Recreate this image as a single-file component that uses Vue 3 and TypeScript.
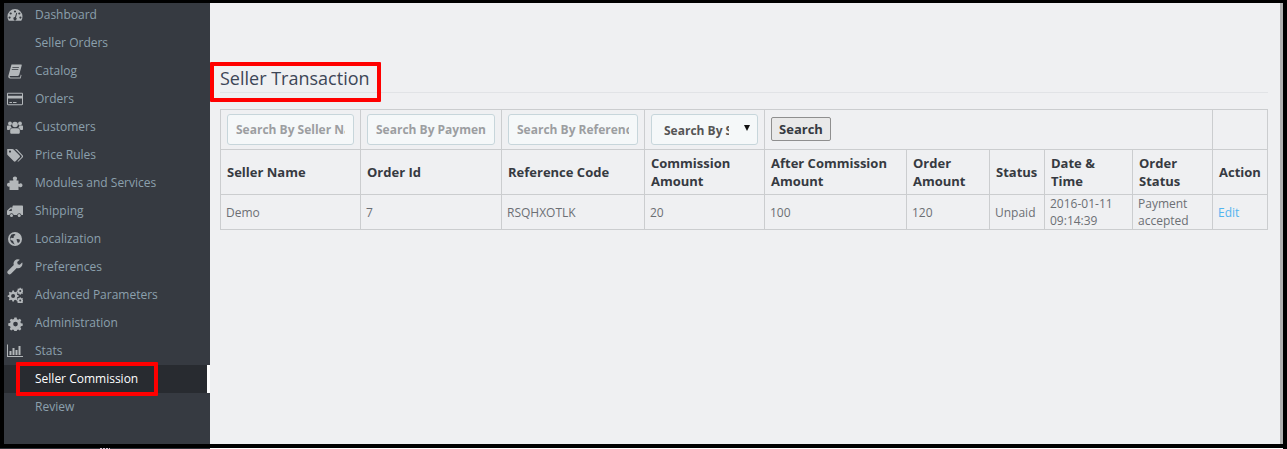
<script setup lang="ts">
interface NavItem { label: string; icon: string; active?: boolean }
const nav: NavItem[] = [
  { label: 'Dashboard', icon: 'dashboard' },
  { label: 'Seller Orders', icon: '' },
  { label: 'Catalog', icon: 'book' },
  { label: 'Orders', icon: 'card' },
  { label: 'Customers', icon: 'users' },
  { label: 'Price Rules', icon: 'tags' },
  { label: 'Modules and Services', icon: 'puzzle' },
  { label: 'Shipping', icon: 'truck' },
  { label: 'Localization', icon: 'globe' },
  { label: 'Preferences', icon: 'wrench' },
  { label: 'Advanced Parameters', icon: 'cogs' },
  { label: 'Administration', icon: 'cog' },
  { label: 'Stats', icon: 'chart' },
  { label: 'Seller Commission', icon: '', active: true },
  { label: 'Review', icon: '' },
]
const searches = ['Search By Seller Name', 'Search By Payment', 'Search By Reference']
const headers = ['Seller Name', 'Order Id', 'Reference Code', 'Commission Amount', 'After Commission Amount', 'Order Amount', 'Status', 'Date & Time', 'Order Status', 'Action']
const row = ['Demo', '7', 'RSQHXOTLK', '20', '100', '120', 'Unpaid', '2016-01-11 09:14:39', 'Payment accepted']
</script>

<template>
  <div class="page">
    <div class="frame">
      <aside class="sidebar">
        <ul class="nav">
          <li v-for="item in nav" :key="item.label" class="nav-item" :class="{ active: item.active }">
            <span class="ico">
              <svg v-if="item.icon === 'dashboard'" viewBox="0 0 16 16" width="16" height="16"><path fill-rule="evenodd" d="M8 2a7.500 7.500 0 0 0-7.500 7.500c0 1.500.4 2.900 1.100 4 .1.200.3.300.5.300h11.800c.2 0 .4-.1.5-.3.7-1.100 1.100-2.500 1.100-4A7.500 7.500 0 0 0 8 2zM8 3.400a1.100 1.100 0 1 1 0 2.200 1.100 1.100 0 0 1 0-2.200zM3.700 5.400a1.100 1.100 0 1 1 0 2.200 1.100 1.100 0 0 1 0-2.200zM12.300 5.400a1.100 1.100 0 1 1 0 2.200 1.100 1.100 0 0 1 0-2.200zM2.600 9.500a1.100 1.100 0 1 1 0 2.200 1.100 1.100 0 0 1 0-2.200zM13.400 9.500a1.100 1.100 0 1 1 0 2.200 1.100 1.100 0 0 1 0-2.200zM9.300 5.800l.9.300-1.200 4.300a1.600 1.600 0 1 1-1-.3z"/></svg>
              <svg v-else-if="item.icon === 'book'" viewBox="0 0 16 16" width="16" height="16"><path fill-rule="evenodd" d="M4.500 1.500H14c.6 0 .9.400.7 1l-2.500 9.300c-.2.7-.7 1.200-1.500 1.200H3.500c-.6 0-.9.500-.7 1 .1.300.4.500.8.500h9.400l.8-3 .7.700-.9 3.300H3.200C2 15.500 1 14.300 1.300 13zM5.500 4.200l-.2.800h6.500l.2-.8zM4.900 6.300l-.2.800h6.500l.2-.8z"/></svg>
              <svg v-else-if="item.icon === 'card'" viewBox="0 0 16 16" width="16" height="16"><path fill-rule="evenodd" d="M1.200 1.800h13.600c.6 0 1.200.5 1.200 1.200v10c0 .7-.6 1.200-1.200 1.200H1.200C.6 14.200 0 13.700 0 13V3c0-.7.600-1.200 1.200-1.200zM1 3v1.800h14V3c0-.1-.1-.2-.2-.2H1.200C1.100 2.800 1 2.900 1 3zm0 4.400V13c0 .1.100.2.200.2h13.600c.1 0 .2-.1.200-.2V7.400zM2.400 11h2.600v1H2.400zm3.600 0h3.500v1H6z"/></svg>
              <svg v-else-if="item.icon === 'users'" viewBox="0 0 16 16" width="16" height="16"><circle cx="3" cy="4.500" r="1.900"/><circle cx="13" cy="4.500" r="1.900"/><circle cx="8" cy="5.500" r="2.800"/><path d="M0 7.500c0-.6.500-1 1-1h2.500c.2 1 .7 1.700 1.300 2.200C3.500 9 2.700 10 2.600 11H1c-.6 0-1-.4-1-1zM16 7.500c0-.6-.5-1-1-1h-2.500c-.2 1-.7 1.700-1.300 2.200 1.300.3 2.100 1.300 2.200 2.300H15c.6 0 1-.4 1-1zM5 9.200h6c1 0 1.800.8 1.800 2v2.300c0 .8-.6 1.300-1.300 1.300h-7c-.7 0-1.300-.5-1.300-1.300v-2.300c0-1.200.8-2 1.800-2z"/></svg>
              <svg v-else-if="item.icon === 'tags'" viewBox="0 0 16 16" width="16" height="16"><path fill-rule="evenodd" d="M.500 2h4.800c.5 0 1 .2 1.300.5l6 6c.5.600.5 1.300 0 1.800l-4 4c-.5.500-1.300.5-1.800 0l-6-6C.400 8 .200 7.500.200 7V2.300c0-.2.100-.3.300-.3zM3 3.500a1.100 1.100 0 1 0 0 2.200 1.100 1.100 0 0 0 0-2.200z"/><path d="M8 2h1c.5 0 1 .2 1.300.5l5.500 6c.5.600.5 1.300 0 1.800l-4 4c-.4.400-1 .4-1.400.2l4-4.200c.5-.5.5-1.200 0-1.800z"/></svg>
              <svg v-else-if="item.icon === 'puzzle'" viewBox="0 0 16 16" width="16" height="16"><path d="M2.500 5.500H6c.4 0 .6-.3.400-.7-.3-.4-.6-.8-.6-1.400C5.800 2.300 6.800 1.500 8 1.500s2.100.8 2.100 1.900c0 .6-.3 1-.6 1.400-.2.400 0 .7.400.7h1.600v3c0 .4.300.6.700.4.400-.3.800-.6 1.400-.6 1 0 1.900.9 1.900 2s-.9 2-1.900 2c-.6 0-1-.3-1.400-.6-.4-.2-.7 0-.7.400v3H2.500v-3.500c0-.4.300-.6.600-.4-.4.300-.8.500-1.300.5-1 0-1.800-.9-1.800-2s.8-2 1.800-2c.5 0 .9.200 1.300.5-.3.200-.6 0-.6-.4z"/></svg>
              <svg v-else-if="item.icon === 'truck'" viewBox="0 0 16 16" width="16" height="16"><path fill-rule="evenodd" d="M6.500 2.500h8.500c.6 0 1 .4 1 1v8.500h-1.600a2.200 2.200 0 0 0-4.300 0H6.700a2.200 2.200 0 0 0-4.300 0H1c-.6 0-1-.4-1-1V8.300c0-.4.100-.7.400-1l2.400-2.400c.3-.3.600-.4 1-.4h1.700V3.500c0-.6.400-1 1-1zM1.700 8H4.800V5.800H4z"/><circle cx="4.500" cy="12.500" r="1.500"/><circle cx="12.200" cy="12.500" r="1.500"/></svg>
              <svg v-else-if="item.icon === 'globe'" viewBox="0 0 16 16" width="16" height="16"><path fill-rule="evenodd" d="M8 1a7 7 0 1 0 0 14A7 7 0 0 0 8 1zM4.500 3.500c.8.200 1.300-.3 2-.5.700-.2 2 .2 1.800 1-.2.800-1.200.5-1.500 1.200-.3.700.3 1.500-.5 1.800-.8.300-1.200-.5-2-.3-.8.200-1.300 1.100-.8 2 .4.800 1.500.6 2.300 1 .7.400.6 1.500 1 2.300.4.700 1 .8.800 1.500a6 6 0 0 1-3.700-9zM10 8c.8-.3 2 0 2.600.6.500.6.200 1.700-.2 2.400-.4.700-1.200.9-1.800.4-.6-.5-.3-1.200-.7-1.800C9.500 9 9.300 8.300 10 8z"/></svg>
              <svg v-else-if="item.icon === 'wrench'" viewBox="0 0 16 16" width="16" height="16"><path d="M15.300 3.800c.1-.2 0-.4-.2-.3l-2.300 2.200-2.100-.5-.5-2.100L12.500.9c.1-.2 0-.4-.2-.4a4.400 4.400 0 0 0-5.500 5.600L1 11.800a2.100 2.100 0 0 0 3 3l5.800-5.700a4.400 4.400 0 0 0 5.500-5.300z"/></svg>
              <svg v-else-if="item.icon === 'cogs'" viewBox="0 0 16 16" width="16" height="16"><path fill-rule="evenodd" d="M5.400 3.500h1.500l.3 1.300 1.100.5 1.200-.7 1 1.100-.7 1.100.5 1.200 1.300.3v1.500l-1.300.3-.5 1.200.7 1.100-1 1-1.200-.7-1.100.5-.3 1.300H5.400l-.3-1.300-1.100-.5-1.200.7-1-1 .7-1.100-.5-1.200L.7 9.900V8.400l1.300-.3.5-1.200-.7-1.100 1-1.100 1.200.7 1.100-.5zM6.100 7.100a2 2 0 1 0 0 4 2 2 0 0 0 0-4z"/><path fill-rule="evenodd" d="M12.700.7h1l.2.800.7.300.7-.4.600.7-.4.700.3.700.8.200v1l-.8.200-.3.700.4.700-.6.700-.7-.4-.7.300-.2.800h-1l-.2-.8-.7-.3-.7.4-.7-.7.400-.7-.3-.7-.8-.2v-1l.8-.2.3-.7-.4-.7.7-.7.7.4.700-.3zM13.200 2.900a1 1 0 1 0 0 2 1 1 0 0 0 0-2z"/><path fill-rule="evenodd" d="M12.700 10.200h1l.2.800.7.300.7-.4.600.7-.4.700.3.700.8.200v1l-.8.200-.3.700.4.700-.6.600-.7-.4-.7.300-.2.800h-1l-.2-.8-.7-.3-.7.4-.7-.6.400-.7-.3-.7-.8-.2v-1l.8-.2.3-.7-.4-.7.7-.7.7.4.700-.3zM13.200 12.400a1 1 0 1 0 0 2 1 1 0 0 0 0-2z"/></svg>
              <svg v-else-if="item.icon === 'cog'" viewBox="0 0 16 16" width="15" height="15"><path fill-rule="evenodd" d="M6.800 1.500h2.400l.4 1.900 1.300.6 1.700-1 1.600 1.600-1 1.700.6 1.300 1.900.4v2.400l-1.900.4-.6 1.300 1 1.700-1.600 1.600-1.700-1-1.300.6-.4 1.700H6.800l-.4-1.700-1.300-.6-1.700 1-1.600-1.600 1-1.700-.6-1.300-1.900-.4V7.800l1.900-.4.6-1.300-1-1.700 1.600-1.600 1.700 1 1.300-.6zM8 6.100a2.500 2.500 0 1 0 0 5 2.500 2.500 0 0 0 0-5z"/></svg>
              <svg v-else-if="item.icon === 'chart'" viewBox="0 0 16 16" width="16" height="16"><path d="M0 1.500h1v11.500h15v1H0z"/><path d="M2.500 8h2v4h-2zM5.500 5h2v7h-2zM8.500 7h2v5h-2zM11.500 3h2v9h-2z"/></svg>
            </span>
            <span class="label">{{ item.label }}</span>
          </li>
        </ul>
      </aside>
      <main class="content">
        <h2 class="title">Seller Transaction</h2>
        <table class="grid">
          <colgroup>
            <col class="c1" /><col class="c2" /><col class="c3" /><col class="c4" /><col class="c5" />
            <col class="c6" /><col class="c7" /><col class="c8" /><col class="c9" /><col class="c10" />
          </colgroup>
          <thead>
            <tr class="filters">
              <td v-for="s in searches" :key="s"><input class="field" type="text" :placeholder="s" /></td>
              <td>
                <div class="select"><span class="select-text">Search By S</span><span class="caret"></span></div>
              </td>
              <td colspan="5"><button class="btn" type="button">Search</button></td>
              <td></td>
            </tr>
            <tr class="heads">
              <th v-for="h in headers" :key="h">{{ h }}</th>
            </tr>
          </thead>
          <tbody>
            <tr class="data">
              <td v-for="(c, i) in row" :key="i">{{ c }}</td>
              <td><a class="edit">Edit</a></td>
            </tr>
          </tbody>
        </table>
      </main>
      <div class="edge"></div>
      <div class="mark mark-title"></div>
      <div class="mark mark-nav"></div>
    </div>
    <div class="foot">
      <div class="foot-dark"><span class="specks"></span></div>
      <div class="foot-light"></div>
    </div>
  </div>
</template>

<style>
html, body { margin: 0; padding: 0; background: #000; }
</style>

<style scoped>
.page {
  box-sizing: border-box;
  width: 1287px;
  height: 449px;
  padding: 3px 4px 0;
  background: #000;
  overflow: hidden;
}
.frame {
  position: relative;
  height: 441px;
  display: flex;
  overflow: hidden;
  background: #eff0f2;
  font-family: "Open Sans", sans-serif;
}
.foot {
  display: flex;
  height: 1px;
  margin: 4px 0 0 -4px;
  width: 1283px;
}
.foot-dark {
  width: 210px;
  flex: none;
  background: #30343a;
  padding-left: 100px;
  box-sizing: border-box;
}
.specks {
  display: block;
  width: 10px;
  height: 1px;
  background: repeating-linear-gradient(90deg, #d9c9d9 0 2px, #30343a 2px 3px);
}
.foot-light {
  flex: 1;
  background: #fff;
}
.sidebar {
  width: 206px;
  flex: none;
  background: #363a41;
  overflow: hidden;
}
.nav {
  list-style: none;
  margin: -2px 0 0;
  padding: 0;
}
.nav-item {
  height: 28px;
  display: flex;
  align-items: center;
  color: #8ca0ad;
  font-size: 12px;
}
.label { padding-bottom: 2px; }
.nav-item.active {
  background: #282b30;
  color: #fff;
  border-right: 3px solid #fff;
}
.ico {
  width: 22px;
  margin-right: 9px;
  flex: none;
  display: flex;
  justify-content: center;
  fill: #b3b7ba;
}
.content {
  flex: 1;
  min-width: 0;
  padding: 62px 12px 0 10px;
}
.edge {
  width: 3px;
  flex: none;
  background: #b0b0b0;
}
.title {
  margin: 0 0 16px;
  padding: 1px 0 2px;
  height: 24px;
  border-bottom: 1px solid #e1e3e6;
  font-weight: 400;
  font-size: 18px;
  line-height: 24px;
  color: #3d4657;
}
.grid {
  table-layout: fixed;
  border-collapse: collapse;
  width: 1047px;
  font-size: 12px;
  color: #6c6f74;
}
.c1 { width: 140px; }
.c2 { width: 141px; }
.c3 { width: 143px; }
.c4 { width: 120px; }
.c5 { width: 142px; }
.c6 { width: 83px; }
.c7 { width: 55px; }
.c8 { width: 88px; }
.c9 { width: 80px; }
.c10 { width: 55px; }
.grid td, .grid th {
  border: 1px solid #cbcdcf;
  padding: 0 6px;
  text-align: left;
  vertical-align: middle;
  box-sizing: border-box;
}
.filters { height: 40px; }
.heads { height: 45px; }
.data { height: 35px; }
.heads th {
  font-weight: 700;
  color: #363a41;
  font-size: 13px;
  line-height: 18px;
}
.data td { line-height: 17px; font-size: 12px; padding: 0 5px; }
.field {
  box-sizing: border-box;
  width: 100%;
  height: 31px;
  border: 1px solid #c7d6db;
  border-radius: 3px;
  background: #f5f8f9;
  padding: 0 8px;
  font: 700 12px "Open Sans", sans-serif;
  color: #999;
  outline: none;
}
.field::placeholder { color: #9c9ea1; opacity: 1; }
.select {
  box-sizing: border-box;
  height: 31px;
  width: 107px;
  border: 1px solid #c7d6db;
  border-radius: 3px;
  background: #f5f8f9;
  display: flex;
  align-items: center;
  position: relative;
  padding: 1px 0 0 12px;
  font-size: 12px;
  font-weight: 700;
  color: #555;
}
.select-text {
  width: 65px;
  overflow: hidden;
  white-space: nowrap;
}
.caret {
  position: absolute;
  right: 7px;
  top: 10px;
  width: 0;
  height: 0;
  border-left: 3px solid transparent;
  border-right: 3px solid transparent;
  border-top: 6px solid #111;
}
.btn {
  height: 24px;
  width: 60px;
  padding: 0;
  border: 1px solid #8f8f8f;
  border-radius: 2px;
  background: #e9e9e9;
  font: 700 13px "Open Sans", sans-serif;
  color: #363a41;
  margin-bottom: 2px;
  display: block;
}
.edit { color: #52b4f0; }
.mark {
  position: absolute;
  box-sizing: border-box;
  border: 4px solid #f00;
  border-radius: 1px;
}
.mark-title { left: 206px; top: 59px; width: 171px; height: 40px; }
.mark-nav { left: 12px; top: 359px; width: 142px; height: 34px; }
</style>
